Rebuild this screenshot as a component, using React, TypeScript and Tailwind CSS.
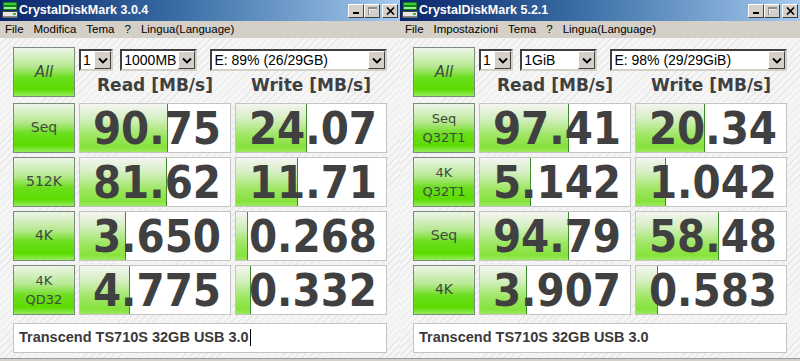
type Row = { label: string[]; read: string; write: string; rw: number; ww: number };

const leftRows: Row[] = [
  { label: ["Seq"], read: "90.75", write: "24.07", rw: 88, ww: 71 },
  { label: ["512K"], read: "81.62", write: "11.71", rw: 87, ww: 62 },
  { label: ["4K"], read: "3.650", write: "0.268", rw: 46, ww: 12 },
  { label: ["4K", "QD32"], read: "4.775", write: "0.332", rw: 50, ww: 15 },
];

const rightRows: Row[] = [
  { label: ["Seq", "Q32T1"], read: "97.41", write: "20.34", rw: 89, ww: 69 },
  { label: ["4K", "Q32T1"], read: "5.142", write: "1.042", rw: 51, ww: 30 },
  { label: ["Seq"], read: "94.79", write: "58.48", rw: 89, ww: 83 },
  { label: ["4K"], read: "3.907", write: "0.583", rw: 47, ww: 22 },
];

function AppIcon() {
  return (
    <svg width="16" height="17" viewBox="0 0 16 17" className="shrink-0">
      <rect x="1.5" y="0.5" width="13" height="3" fill="#35d235" stroke="#1b7d1b" />
      <rect x="1.5" y="4.5" width="13" height="3" fill="#8ff08f" stroke="#1b7d1b" />
      <rect x="0.5" y="9.5" width="15" height="6" fill="#e8e8e8" stroke="#4a4a4a" />
      <rect x="1" y="14" width="14" height="1.5" fill="#8a8a8a" />
      <rect x="11" y="11" width="3" height="2" fill="#2fbf2f" />
    </svg>
  );
}

function TitleButton({ kind }: { kind: "min" | "max" | "close" }) {
  return (
    <div className="flex h-[14px] w-[16px] items-center justify-center border border-t-white border-l-white border-b-[#404040] border-r-[#404040] bg-[#d4d0c8]">
      {kind === "min" && (
        <svg width="8" height="8" viewBox="0 0 8 8">
          <rect x="1" y="5" width="6" height="2" fill="#000" />
        </svg>
      )}
      {kind === "max" && (
        <svg width="10" height="9" viewBox="0 0 10 9">
          <rect x="1.5" y="1.5" width="8" height="7" fill="none" stroke="#8c8c8c" />
          <rect x="1" y="1" width="9" height="2" fill="#8c8c8c" />
          <rect x="2.5" y="3.5" width="7" height="5" fill="none" stroke="#fff" strokeWidth="0.6" />
        </svg>
      )}
      {kind === "close" && (
        <svg width="9" height="8" viewBox="0 0 9 8">
          <path d="M1 0.5 L8 7.5 M8 0.5 L1 7.5" stroke="#000" strokeWidth="1.6" />
        </svg>
      )}
    </div>
  );
}

function Combo({ text, width }: { text: string; width: string }) {
  return (
    <div className={`flex h-[22px] ${width} border-2 border-[#d4d0c8] border-t-[#404040] border-l-[#404040] bg-white`}>
      <div className="flex-1 truncate pl-[2px] font-['Liberation_Sans',sans-serif] text-[14px] leading-[18px] text-black">
        {text}
      </div>
      <div className="flex w-[17px] items-center justify-center border border-t-white border-l-white border-b-[#404040] border-r-[#404040] bg-[#d4d0c8]">
        <svg width="10" height="7" viewBox="0 0 10 7">
          <path d="M1 1.5 L5 5.5 L9 1.5" fill="none" stroke="#000" strokeWidth="1.8" />
        </svg>
      </div>
    </div>
  );
}

function GreenButton({ label, big }: { label: string[]; big?: boolean }) {
  return (
    <div className="flex h-[50px] flex-col items-center justify-center border border-[#7a8c7a] bg-[linear-gradient(to_bottom,#eef5ea_0%,#b6e890_38%,#6ade1c_62%,#5cdc00_86%,#96ec5c_100%)] font-['DejaVu_Sans',sans-serif] leading-[19px] text-[#404a40]">
      {label.map((l) => (
        <span key={l} className={big ? "text-[15px] italic" : label.length > 1 ? "text-[13px]" : "text-[14px]"}>
          {l}
        </span>
      ))}
    </div>
  );
}

function Cell({ value, bar }: { value: string; bar: number }) {
  return (
    <div className="relative h-[50px] border border-[#c4c4c4] bg-white">
      <div
        className="absolute bottom-0 left-0 top-0 border-r border-[#3f8a2c] bg-[linear-gradient(to_bottom,#f4f6f2_0%,#d6efc2_30%,#9ee664_65%,#86e23c_90%,#9cea60_100%)]"
        style={{ width: bar }}
      />
      <div className="relative flex h-full items-center justify-end pr-[9px] pt-[2px] font-['DejaVu_Sans_Condensed','DejaVu_Sans',sans-serif] text-[45px] font-bold leading-[46px] text-[#404040]">
        {value}
      </div>
    </div>
  );
}

function Window({
  version,
  menu,
  count,
  size,
  drive,
  rows,
  caret,
}: {
  version: string;
  menu: string[];
  count: string;
  size: string;
  drive: string;
  rows: Row[];
  caret?: boolean;
}) {
  return (
    <div className="flex h-[361px] w-[400px] flex-col">
      {/* title bar */}
      <div className="flex h-[21px] items-center bg-[linear-gradient(to_right,#0a246a_0%,#3a6ea5_45%,#a6caf0_100%)] pl-[2px] pr-[2px]">
        <AppIcon />
        <span className="ml-[1px] flex-1 font-['Liberation_Sans',sans-serif] text-[12.5px] font-bold text-white">
          CrystalDiskMark {version}
        </span>
        <TitleButton kind="min" />
        <TitleButton kind="max" />
        <div className="w-[2px]" />
        <TitleButton kind="close" />
      </div>

      {/* menu */}
      <div className="flex h-[17px] items-center gap-[10px] bg-[#d4d0c8] pl-[5px] font-['Liberation_Sans',sans-serif] text-[11.5px] text-black">
        {menu.map((m) => (
          <span key={m}>{m}</span>
        ))}
      </div>

      {/* body */}
      <div className="flex-1 bg-[repeating-linear-gradient(135deg,#f5f5f5_0px,#f5f5f5_4px,#e8e8e8_4px,#e8e8e8_5px)] pl-[13px] pt-[9px]">
        <div className="grid grid-cols-[62px_152px_152px] gap-x-[4px] gap-y-[4px]">
          <GreenButton label={["All"]} big />
          <div className="col-span-2 flex flex-col">
            <div className="mt-[2px] flex gap-[7px]">
              <Combo text={count} width="w-[35px]" />
              <Combo text={size} width="w-[79px]" />
              <div className="-ml-[1px]" />
              <Combo text={drive} width="w-[181px]" />
            </div>
            <div className="grid flex-1 grid-cols-2 gap-x-[4px] pt-[2px] font-['DejaVu_Sans',sans-serif] text-[17px] font-bold text-[#404040]">
              <div className="flex items-center justify-center">Read [MB/s]</div>
              <div className="flex items-center justify-center">Write [MB/s]</div>
            </div>
          </div>

          {rows.map((r) => (
            <div key={r.label.join() + r.read} className="contents">
              <GreenButton label={r.label} />
              <Cell value={r.read} bar={r.rw} />
              <Cell value={r.write} bar={r.ww} />
            </div>
          ))}

          <div className="col-span-3 mt-[4px] flex h-[30px] items-center border border-[#c4c4c4] bg-white pl-[5px] font-['Liberation_Sans',sans-serif] text-[14.5px] font-bold text-[#3a3a3a]">
            Transcend TS710S 32GB USB 3.0
            {caret && <span className="ml-[1px] inline-block h-[17px] w-[1px] bg-black" />}
          </div>
        </div>
      </div>

      {/* bottom frame */}
      <div className="h-[3px] border-t border-[#9a9a9a] bg-[#d4d0c8]" />
    </div>
  );
}

export default function App() {
  return (
    <div className="flex h-[361px] w-[800px] overflow-hidden bg-[#d4d0c8]">
      <Window
        version="3.0.4"
        menu={["File", "Modifica", "Tema", "?", "Lingua(Language)"]}
        count="1"
        size="1000MB"
        drive="E: 89% (26/29GB)"
        rows={leftRows}
        caret
      />
      <Window
        version="5.2.1"
        menu={["File", "Impostazioni", "Tema", "?", "Lingua(Language)"]}
        count="1"
        size="1GiB"
        drive="E: 98% (29/29GiB)"
        rows={rightRows}
      />
    </div>
  );
}
